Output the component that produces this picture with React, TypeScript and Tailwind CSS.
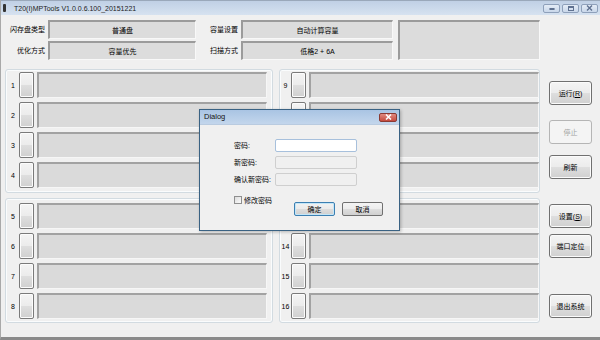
import React from "react";

const btnGrad =
  "bg-[linear-gradient(to_bottom,#f4f4f4_0%,#ececec_48%,#dedede_52%,#d0d0d0_100%)]";

function RowButton() {
  return (
    <div
      className={`w-[15px] h-[26px] rounded-[2px] border border-[#7a7a7a] ${btnGrad} shadow-[inset_0_0_0_1px_#fcfcfc]`}
    />
  );
}

function Field({ className = "" }: { className?: string }) {
  return (
    <div
      className={`bg-[#dadada] border-t-2 border-l-2 border-t-[#a2a2a2] border-l-[#a2a2a2] border-r border-b border-r-[#f6f6f6] border-b-[#f6f6f6] ${className}`}
    />
  );
}

function Row({ n, numW }: { n: number; numW: string }) {
  return (
    <div className="flex items-center h-[26px]">
      <div className={`${numW} text-center text-[7px] leading-none`}>{n}</div>
      <RowButton />
      <Field className="ml-[3px] w-[230px] h-[26px]" />
    </div>
  );
}

function Group({
  start,
  left,
  pt,
}: {
  start: number;
  left: boolean;
  pt: string;
}) {
  const nums = [start, start + 1, start + 2, start + 3];
  return (
    <div
      className={`border border-[#d2dbe1] rounded-[3px] shadow-[inset_0_0_0_1px_#fafcfd] flex flex-col gap-[4px] ${pt} ${
        left ? "pl-[1px]" : ""
      }`}
    >
      {nums.map((n) => (
        <Row key={n} n={n} numW={left ? "w-[12px]" : "w-[11px]"} />
      ))}
    </div>
  );
}

function SideButton({
  children,
  mt,
  disabled,
}: {
  children: React.ReactNode;
  mt: string;
  disabled?: boolean;
}) {
  return (
    <div
      className={`${mt} w-[43px] h-[24px] rounded-[3px] flex items-center justify-center text-[7px] leading-none ${
        disabled
          ? "border border-[#b5b5b5] bg-[#f4f4f4] text-[#a3a3a3]"
          : `border border-[#707070] ${btnGrad} shadow-[inset_0_0_0_1px_#fbfbfb] text-black`
      }`}
    >
      {children}
    </div>
  );
}

function WinCtl({ children }: { children: React.ReactNode }) {
  return (
    <div className="w-[17px] h-[9px] rounded-[2px] border border-[#8ea0ba] bg-[linear-gradient(to_bottom,#e4ecf6,#c9d7ea)] flex items-center justify-center">
      {children}
    </div>
  );
}

function Sunken({
  className = "",
  children,
}: {
  className?: string;
  children?: React.ReactNode;
}) {
  return (
    <div
      className={`h-[19px] flex items-center justify-center bg-[#dcdcdc] border-t-2 border-l-2 border-t-[#9b9b9b] border-l-[#9b9b9b] border-r border-b border-r-[#f8f8f8] border-b-[#f8f8f8] ${className}`}
    >
      {children}
    </div>
  );
}

export default function App() {
  return (
    <div className="relative w-[600px] h-[340px] overflow-hidden bg-[#f0f0f0] border-l border-l-[#a9a9a9] border-b-[3px] border-b-[#8a8a8a] font-['Liberation_Sans','Noto_Sans_CJK_SC',sans-serif] text-black flex flex-col">
      {/* title bar */}
      <div className="h-[15px] shrink-0 flex items-center bg-[linear-gradient(to_bottom,#c0d0e5,#d6e2f0)] border-t border-t-[#9aa8ba]">
        <div className="ml-[2px] w-[3px] h-[8px] bg-[#333] rounded-[1px]" />
        <div className="ml-[8px] text-[7px] leading-none text-[#1c1c1c]">
          T20(I)MPTools V1.0.0.6.100_20151221
        </div>
        <div className="ml-auto mr-[2px] flex gap-[2px] items-center">
          <WinCtl>
            <div className="w-[6px] h-[2px] border border-[#5f7190] rounded-[1px] mt-[2px]" />
          </WinCtl>
          <WinCtl>
            <div className="w-[6px] h-[5px] border border-[#5f7190] border-t-2" />
          </WinCtl>
          <WinCtl>
            <svg width="7" height="6" viewBox="0 0 7 6">
              <path d="M1 0.5 L6 5.5 M6 0.5 L1 5.5" stroke="#5f7190" strokeWidth="1.4" />
            </svg>
          </WinCtl>
        </div>
      </div>

      {/* top info section */}
      <div className="flex pt-[5px] text-[7px] leading-none">
        <div className="flex flex-col gap-[2px]">
          <div className="flex items-center h-[19px]">
            <div className="w-[44px] text-right">闪存盘类型</div>
            <Sunken className="ml-[3px] w-[148px]">普通盘</Sunken>
          </div>
          <div className="flex items-center h-[19px]">
            <div className="w-[44px] text-right">优化方式</div>
            <Sunken className="ml-[3px] w-[148px]">容量优先</Sunken>
          </div>
        </div>
        <div className="flex flex-col gap-[2px]">
          <div className="flex items-center h-[19px]">
            <div className="w-[42px] text-right">容量设置</div>
            <Sunken className="ml-[3px] w-[152px]">自动计算容量</Sunken>
          </div>
          <div className="flex items-center h-[19px]">
            <div className="w-[42px] text-right">扫描方式</div>
            <Sunken className="ml-[3px] w-[152px]">低格2 + 6A</Sunken>
          </div>
        </div>
        <Sunken className="ml-[5px] w-[142px] !h-[40px]" />
      </div>

      {/* main area */}
      <div className="flex mt-[9px] pl-[4px]">
        <div className="grid grid-cols-[268px_261px] grid-rows-[124px_125px] gap-x-[6px] gap-y-[5px]">
          <Group start={1} left pt="pt-[2px]" />
          <Group start={9} left={false} pt="pt-[2px]" />
          <Group start={5} left pt="pt-[4px]" />
          <Group start={13} left={false} pt="pt-[4px]" />
        </div>
        <div className="ml-[9px] flex flex-col">
          <SideButton mt="mt-[12px]">
            运行(<span className="underline">R</span>)
          </SideButton>
          <SideButton mt="mt-[15px]" disabled>
            停止
          </SideButton>
          <SideButton mt="mt-[11px]">刷新</SideButton>
          <SideButton mt="mt-[25px]">
            设置(<span className="underline">S</span>)
          </SideButton>
          <SideButton mt="mt-[6px]">端口定位</SideButton>
          <SideButton mt="mt-[36px]">退出系统</SideButton>
        </div>
      </div>

      {/* dialog */}
      <div className="absolute left-[198px] top-[109px] w-[201px] h-[122px] border border-[#3a6283] bg-[#f0f0f0] flex flex-col shadow-[1px_1px_3px_rgba(0,0,0,0.25)]">
        <div className="h-[15px] shrink-0 flex items-center bg-[linear-gradient(to_bottom,#a9c4e3,#c3d6ec)] border-b border-b-[#b9cbe0]">
          <div className="ml-[4px] text-[7.5px] leading-none text-[#111]">Dialog</div>
          <div className="ml-auto mr-[2px] w-[18px] h-[9px] rounded-[2px] border border-[#8b3a33] bg-[linear-gradient(to_bottom,#e08a80,#c54a3e)] flex items-center justify-center">
            <svg width="7" height="6" viewBox="0 0 7 6">
              <path d="M1 0.5 L6 5.5 M6 0.5 L1 5.5" stroke="#fff" strokeWidth="1.5" />
            </svg>
          </div>
        </div>
        <div className="flex flex-col pl-[34px] pt-[14px] text-[7px] leading-none">
          <div className="flex flex-col gap-[4px]">
            <div className="flex items-center h-[13px]">
              <div className="w-[41px] shrink-0 whitespace-nowrap">密码:</div>
              <div className="w-[82px] shrink-0 h-[13px] bg-white border border-[#a7c0dc] rounded-[2px]" />
            </div>
            <div className="flex items-center h-[13px]">
              <div className="w-[41px] shrink-0 whitespace-nowrap">新密码:</div>
              <div className="w-[82px] shrink-0 h-[13px] bg-[#f0f0f0] border border-[#cfcfcf] rounded-[2px]" />
            </div>
            <div className="flex items-center h-[13px]">
              <div className="w-[41px] shrink-0 whitespace-nowrap">确认新密码:</div>
              <div className="w-[82px] shrink-0 h-[13px] bg-[#f0f0f0] border border-[#cfcfcf] rounded-[2px]" />
            </div>
          </div>
          <div className="flex items-start mt-[10px]">
            <div className="w-[60px] shrink-0 flex items-center">
              <div className="w-[8px] h-[8px] border border-[#8f8f8f] bg-[linear-gradient(135deg,#dcdcdc,#fbfbfb)]" />
              <div className="ml-[2px] whitespace-nowrap">修改密码</div>
            </div>
            <div className="mt-[6px] flex gap-[7px]">
              <div className="w-[41px] h-[14px] rounded-[2px] border border-[#3c7fb1] bg-[linear-gradient(to_bottom,#f2f2f2_0%,#ebebeb_48%,#dddddd_52%,#cfcfcf_100%)] shadow-[inset_0_0_0_1px_#c3e6f8] flex items-center justify-center">
                确定
              </div>
              <div className={`w-[41px] h-[14px] rounded-[2px] border border-[#707070] ${btnGrad} flex items-center justify-center`}>
                取消
              </div>
            </div>
          </div>
        </div>
      </div>
    </div>
  );
}
